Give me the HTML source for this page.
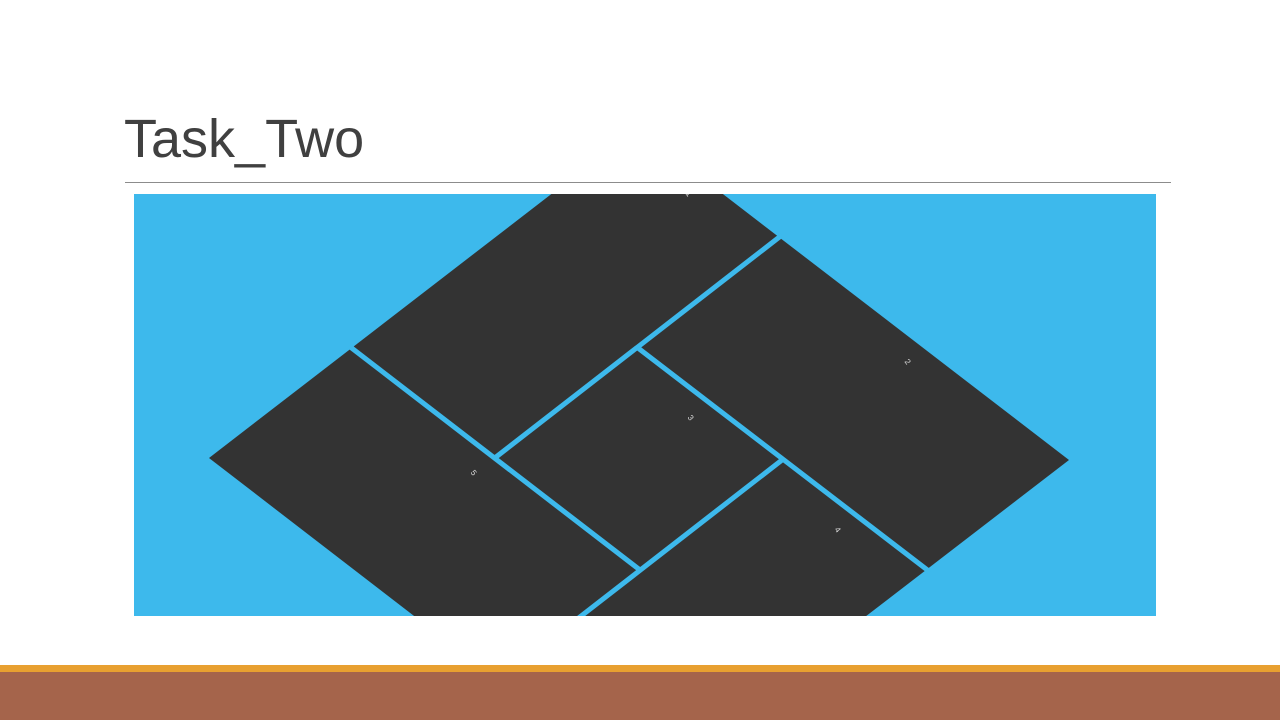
<!DOCTYPE html>
<html><head><meta charset="utf-8"><style>
html,body{margin:0;padding:0;width:1280px;height:720px;overflow:hidden;background:#fff;position:relative}
.t{position:absolute;left:124px;top:103px;font-family:"Liberation Sans",sans-serif;font-size:54px;color:#404040;line-height:72px;font-weight:300;white-space:nowrap}
.hr{position:absolute;left:125px;top:182px;width:1046px;height:1px;background:#8c8c8c}
svg{position:absolute;left:0;top:0;display:block}
.o{position:absolute;left:0;top:665px;width:1280px;height:7px;background:#E8A030}
.b{position:absolute;left:0;top:672px;width:1280px;height:48px;background:#A5644B}
</style></head><body>
<div class="t">Task_Two</div>
<div class="hr"></div>
<svg width="1280" height="720">
<defs><clipPath id="c"><rect x="134" y="194" width="1022" height="422"/></clipPath></defs>
<rect x="134" y="194" width="1022" height="422" fill="#3DB9EC"/>
<g clip-path="url(#c)">
<polygon points="209,458 637,128 1069,460 640,790" fill="#333333"/>
<g stroke="#3DB9EC" stroke-width="5">
<line x1="782" y1="235" x2="496" y2="457"/>
<line x1="349" y1="346" x2="640" y2="570"/>
<line x1="638" y1="348" x2="930" y2="572"/>
<line x1="782" y1="460" x2="576" y2="620"/>
</g>
<g fill="#ddd" font-family="Liberation Sans" font-size="8">
<text x="686" y="196" transform="rotate(52 688 194)">1</text>
<text x="905" y="364" transform="rotate(52 907 362)">2</text>
<text x="688" y="420" transform="rotate(52 690 418)">3</text>
<text x="835" y="532" transform="rotate(52 837 530)">4</text>
<text x="471" y="475" transform="rotate(52 473 473)">5</text>
</g>
</g>
</svg>
<div class="o"></div><div class="b"></div>
</body></html>
